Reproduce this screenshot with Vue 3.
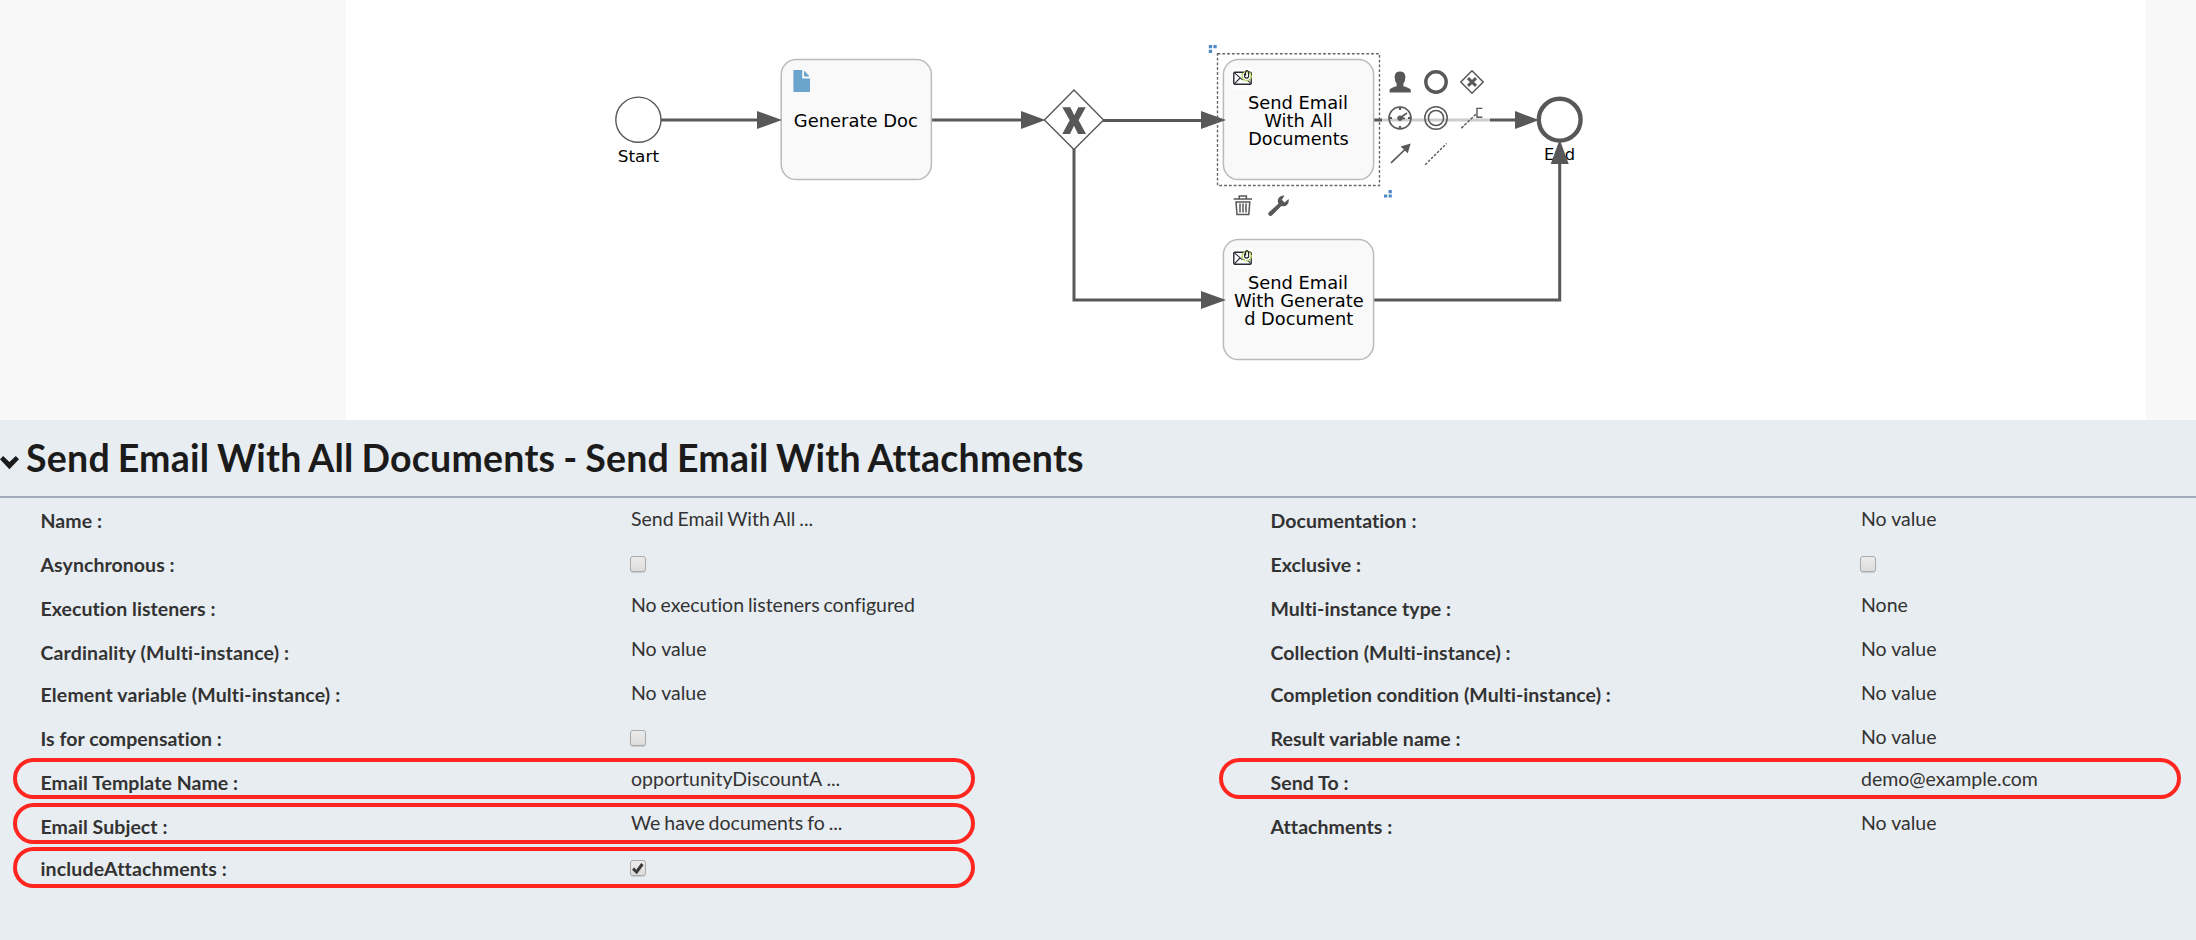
<script setup>
const left = {
  labels: [
    { text: 'Name :' },
    { text: 'Asynchronous :' },
    { text: 'Execution listeners :' },
    { text: 'Cardinality (Multi-instance) :', short: true, wide: true },
    { text: 'Element variable (Multi-instance) :', wide: true },
    { text: 'Is for compensation :' },
    { text: 'Email Template Name :' },
    { text: 'Email Subject :', short: true },
    { text: 'includeAttachments :', wide: true }
  ],
  values: [
    { text: 'Send Email With All ...', tight: true },
    { box: true, short: true },
    { text: 'No execution listeners configured', tight: true },
    { text: 'No value' },
    { text: 'No value' },
    { box: true, short: true },
    { text: 'opportunityDiscountA ...' },
    { text: 'We have documents fo ...', tight: true },
    { box: true, checked: true }
  ]
}
const right = {
  labels: [
    { text: 'Documentation :' },
    { text: 'Exclusive :' },
    { text: 'Multi-instance type :' },
    { text: 'Collection (Multi-instance) :', short: true },
    { text: 'Completion condition (Multi-instance) :' },
    { text: 'Result variable name :' },
    { text: 'Send To :' },
    { text: 'Attachments :' }
  ],
  values: [
    { text: 'No value' },
    { box: true, short: true },
    { text: 'None' },
    { text: 'No value' },
    { text: 'No value' },
    { text: 'No value', short: true },
    { text: 'demo@example.com' },
    { text: 'No value' }
  ]
}
const columns = [left, right]
const mailTasks = [
  { y: 0, lines: [['Send Email', 1248, 100], ['With All', 1264.3, 68.5], ['Documents', 1248.3, 100.5]] },
  { y: 180, lines: [['Send Email', 1248, 100], ['With Generate', 1234, 129.7], ['d Document', 1244.2, 109]] }
]
</script>

<template>
  <main class="page">
    <section class="editor">
      <div class="gutter-left"></div>
      <svg class="canvas" viewBox="346 0 1800 420" width="1800" height="420">
        <!-- sequence flows -->
        <g class="flow">
          <path d="M661 120H760M931 120H1022M1103 120.4H1204M1074 149V300H1204M1373 120H1382M1490 120H1517M1373 300H1559.7V163" />
          <path d="M1382 120H1490" class="faded" />
        </g>

        <circle cx="638.4" cy="119.7" r="22.6" class="thin" />
        <text class="label" x="617.8" y="162" textLength="41.2" lengthAdjust="spacingAndGlyphs">Start</text>

        <rect x="781.2" y="59.6" width="150.2" height="120" rx="15" class="task" />
        <path d="M794.2 70H802.2V78.6H810V91.2Q810 92 809.2 92H794.2Q793.4 92 793.4 91.2V70.8Q793.4 70 794.2 70ZM804 70.4L809.6 76.6H804Z" fill="#6ba4cd" />
        <text class="task-label" x="793.8" y="126.7" textLength="124" lengthAdjust="spacingAndGlyphs">Generate Doc</text>

        <path d="M1074 90L1103.6 120L1074 149.6L1044.4 120Z" class="thin" />
        <path d="M1062.3 107.2H1070.3L1074.3 115.2L1078.3 107.2H1085.8L1078.6 120.3L1086 134H1078L1074 125.8L1070 134H1062.3L1069.7 120.3Z" class="solid" />

        <g v-for="t in mailTasks" :key="t.y" :transform="`translate(0 ${t.y})`">
          <rect x="1223.4" y="59.6" width="150.2" height="120" rx="15" class="task" />
          <rect x="1232" y="68" width="20.6" height="20.6" fill="#fff" />
          <rect x="1233.8" y="72.2" width="17.4" height="12" rx="1" fill="none" stroke="#2b2b35" stroke-width="1.4" />
          <path d="M1234.2 72.6L1242.2 79.6L1246 76.5M1234.4 83.8L1240 78M1251 84L1247 79.5" fill="none" stroke="#2b2b35" stroke-width="1.1" />
          <circle cx="1246.6" cy="76.2" r="4.6" fill="#fafafa" stroke="#a6cf4b" stroke-width="1.6" stroke-dasharray="2 1" />
          <path d="M1244.6 73.5V76.8Q1246.6 79.4 1248.6 76.8V71.8Q1247 69.6 1245.6 71.6V75.6" fill="none" stroke="#222" stroke-width="1.1" />
          <text v-for="(l, i) in t.lines" :key="i" class="task-label" :x="l[1]" :y="108.7 + i * 18" :textLength="l[2]" lengthAdjust="spacingAndGlyphs">{{ l[0] }}</text>
        </g>

        <circle cx="1559.7" cy="119.7" r="20.9" class="thick" />
        <text class="label" x="1544" y="159.7" textLength="31" lengthAdjust="spacingAndGlyphs">End</text>

        <!-- arrow heads -->
        <path class="solid" d="M757 111L782 120L757 129ZM1021 111L1045.5 120L1021 129ZM1201 111L1226 120L1201 129ZM1201 291L1226 300L1201 309ZM1515 111L1539 120L1515 129ZM1550.7 164L1559.7 139.5L1568.7 164Z" />

        <!-- selection -->
        <rect x="1217.5" y="53.7" width="162" height="131.8" class="selection" />
        <path fill="#4f88c6" d="M1208.8 45h3.3v3.3h-3.3zM1213.4 45h3.3v3.3h-3.3zM1208.8 49.8h3.3v3.3h-3.3zM1388.6 190h3.2v3.2h-3.2zM1384 194.4h3.2v3.2h-3.2zM1388.6 194.4h3.2v3.2h-3.2z" />

        <!-- context pad -->
        <g class="pad">
          <path class="solid" stroke="none" d="M1389.6 92.5V89.8Q1390.5 87.8 1396.6 86.2V83.8Q1394.6 81 1394.6 76.4Q1395 71.4 1400 71.4Q1405 71.4 1405.4 76.4Q1405.4 81 1403.4 83.8V86.2Q1409.5 87.8 1410.8 89.8V92.5Z" />
          <circle cx="1436" cy="82" r="10.2" stroke-width="3.4" />
          <path d="M1472 70.8L1483.2 82L1472 93.2L1460.8 82Z" stroke-width="1.5" />
          <path d="M1468 78.2L1476 85.8M1476 78.2L1468 85.8" stroke-width="3" />
          <circle cx="1400" cy="118" r="11" stroke-width="1.6" />
          <path d="M1400 107V110M1400 126V129M1389 118H1392M1408 118H1411" stroke-width="2.2" />
          <path d="M1400 118L1407 113M1400 118.4H1405" stroke-width="1.6" />
          <circle cx="1400" cy="118.2" r="2.3" fill="#585858" />
          <circle cx="1436" cy="118" r="11.2" stroke-width="1.5" />
          <circle cx="1436" cy="118" r="7.6" stroke-width="1.5" />
          <path d="M1461.3 128.2L1477 113.2" stroke-width="1.4" stroke-dasharray="3 1.3" />
          <path d="M1482.4 108.4H1477V117.3H1482.4" stroke-width="1.4" />
          <path d="M1391 162.8L1405.5 149" stroke-width="1.7" />
          <path class="solid" d="M1410.6 143.4L1407.8 153.2L1400.6 146.6Z" stroke="none" />
          <path d="M1425.2 164.8L1446.6 143.4" stroke-width="1.4" stroke-dasharray="2.6 1.6" />
          <path d="M1233.6 199H1252M1239.2 198.5V196H1246.4V198.5M1235.2 202H1250.6M1236 202L1237 214.4H1248.8L1249.8 202M1240 203.5V212.5M1243 203.5V212.5M1246 203.5V212.5" stroke-width="1.5" />
          <path class="solid" stroke="none" d="M1284.6 195.6Q1280.4 195.2 1278.4 198.6Q1277.2 201.2 1278.4 203.8L1268.8 212.2Q1267.6 214.2 1269.2 215.4Q1270.8 216.6 1272.4 215L1281.4 206Q1285 207 1287.4 204.4Q1289.2 202.2 1288.6 199L1284.6 202.4L1281.8 199.8Z" />
        </g>
      </svg>
      <div class="gutter-right"></div>
    </section>

    <section class="panel">
      <header class="title-bar">
        <svg class="chevron" width="19" height="15" viewBox="0 0 19 15"><path d="M0 4.2L3.2 1L9.4 7L15.8 1L19 4.2L9.4 14.2Z" fill="#1b1b1b" /></svg>
        <h1>Send Email With All Documents - Send Email With Attachments</h1>
      </header>
      <div class="properties">
        <div v-for="(c, n) in columns" :key="n" class="group">
          <div class="names">
            <div v-for="(r, i) in c.labels" :key="i" class="cell" :class="{ short: r.short, wide: r.wide }"><span>{{ r.text }}</span></div>
          </div>
          <div class="values">
            <div v-for="(r, i) in c.values" :key="i" class="cell" :class="{ short: r.short, tight: r.tight }">
              <span v-if="r.text">{{ r.text }}</span>
              <i v-else class="check">
                <svg v-if="r.checked" width="12" height="12" viewBox="0 0 12 12"><path d="M1 6.6L4.6 10L10.4 2" fill="none" stroke="#3b3b3b" stroke-width="3" /></svg>
              </i>
            </div>
          </div>
        </div>
        <div class="mark template"></div>
        <div class="mark subject"></div>
        <div class="mark include"></div>
        <div class="mark recipient"></div>
      </div>
    </section>
  </main>
</template>

<style>
body { margin: 0; }
</style>

<style scoped>
.page { width: 2196px; height: 940px; overflow: hidden; background: #e8edf1; font-family: Lato, sans-serif; font-variant-ligatures: none; color: #333; }
.editor { display: flex; height: 420px; background: #fff; }
.gutter-left { width: 346px; background: #f8f8f8; }
.gutter-right { width: 50px; background: #f8f8f8; }
.canvas { display: block; flex: none; }
.flow path { fill: none; stroke: #585858; stroke-width: 3; }
.flow .faded { stroke: #cdcdcd; }
.thin { fill: #fff; stroke: #585858; stroke-width: 1.4; }
.thick { fill: #fff; stroke: #585858; stroke-width: 4.4; }
.solid { fill: #585858; }
.task { fill: #f9f9f9; stroke: #bbb; stroke-width: 1.5; }
.selection { fill: none; stroke: #666; stroke-width: 1.4; stroke-dasharray: 2.8 2; }
.pad { fill: none; stroke: #585858; }
.label, .task-label { font-family: Verdana, "DejaVu Sans", sans-serif; fill: #000; }
.label { font-size: 16.5px; }
.task-label { font-size: 18px; }
.title-bar { display: flex; height: 76px; border-bottom: 2px solid #a1abbc; }
.chevron { flex: none; margin-top: 35px; }
h1 { margin: 15px 0 0 7px; font-size: 37.5px; line-height: 46px; font-weight: 700; letter-spacing: .23px; word-spacing: -1.5px; color: #1b1b1b; white-space: nowrap; }
.properties { position: relative; display: flex; height: 442px; }
.group { display: flex; width: 1230px; flex: none; padding-left: 40px; box-sizing: border-box; }
.names { width: 591px; padding-top: 11px; font-weight: 700; letter-spacing: .06px; }
.names span { margin-left: .5px; }
.values { padding-top: 9px; }
.cell { display: flow-root; height: 44px; font-size: 19.5px; line-height: 24px; white-space: nowrap; }
.cell.short { height: 42px; }
.cell.wide { letter-spacing: .15px; }
.cell.tight { word-spacing: -1.1px; }
.check { display: flex; align-items: center; justify-content: center; width: 14px; height: 14px; margin: 5px 0 0 -1px; border: 1px solid #aaa; border-radius: 3px; background: linear-gradient(#ececec, #dcdcdc); box-shadow: 0 1px 1px rgba(0, 0, 0, .14); }
.mark { position: absolute; box-sizing: border-box; width: 962px; height: 41px; border: 4px solid #ff2620; border-radius: 20.5px; left: 13px; }
.template { top: 260px; }
.subject { top: 305px; }
.include { top: 349px; }
.recipient { top: 260px; left: 1219px; }
</style>
